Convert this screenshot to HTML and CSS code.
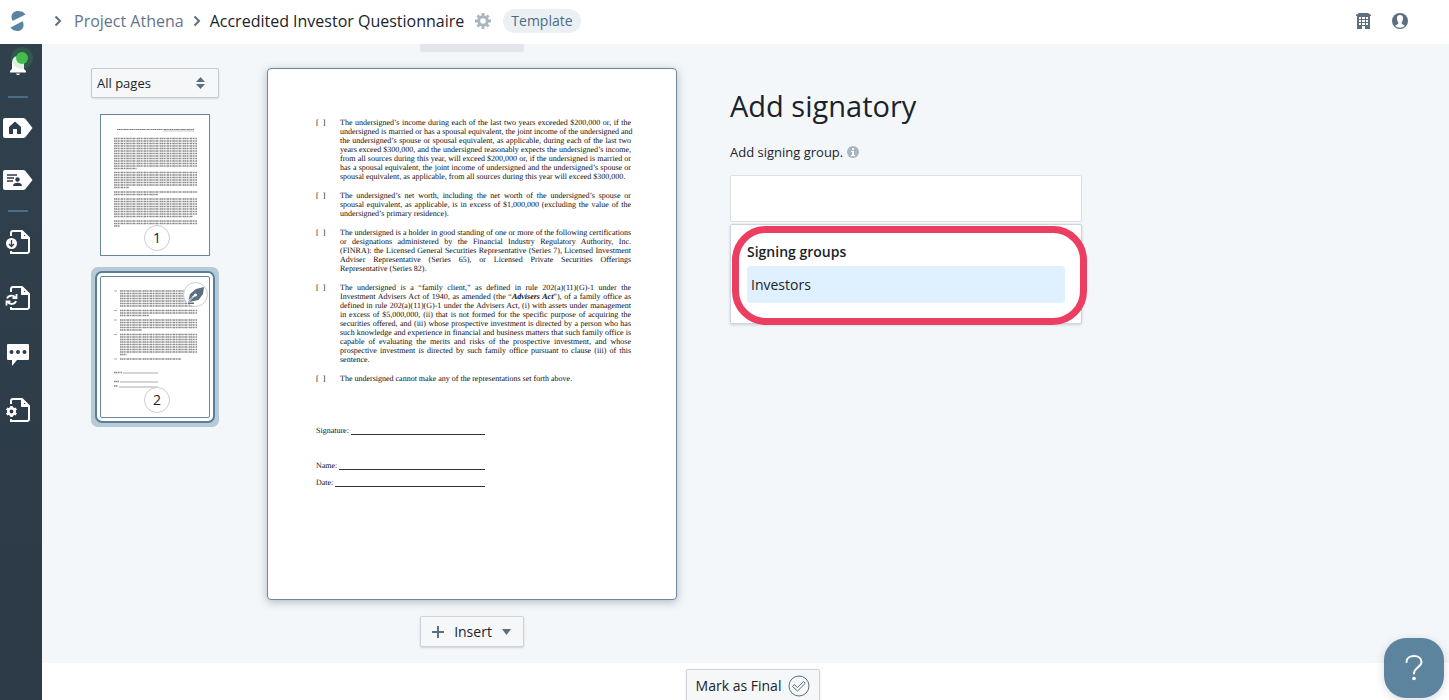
FILE: index.html
```html
<!DOCTYPE html>
<html lang="en">

<head>
    <meta charset="UTF-8">
    <meta name="viewport" content="width=device-width, initial-scale=1.0">
    <title>Accredited Investor Questionnaire</title>
    <link rel="stylesheet" href="styles.css">
</head>

<body>
    <header class="topbar">
        <a href="#" class="logo" aria-label="Home">
            <svg width="16" height="20" viewBox="0 0 16 20" fill="#5b84a0">
                <path d="M15.500 3.500C14 1 11 0 8 0C4 0 1.500 2.500 1.500 6C1.500 8 2 9 3 9.800Z" />
                <path d="M.5 16.500C2 19 5 20 7.500 20C11 20 13.500 17.500 13.500 14.500C13.500 12.500 13.200 11.300 12.500 10.200Z" />
            </svg>
        </a>
        <nav class="breadcrumb">
            <svg class="chevron" width="8" height="12" viewBox="0 0 8 12"><path d="M1.500 1.500L6 6L1.500 10.500" /></svg>
            <a href="#" class="crumb">Project Athena</a>
            <svg class="chevron" width="8" height="12" viewBox="0 0 8 12"><path d="M1.500 1.500L6 6L1.500 10.500" /></svg>
            <span class="crumb-current">Accredited Investor Questionnaire</span>
        </nav>
        <button class="icon-button" aria-label="Settings">
            <svg width="16" height="16" viewBox="-8 -8 16 16" fill="none" stroke="#a9b6c1">
                <circle r="4.300" stroke-width="3" />
                <path stroke-width="2.800" d="M0-5V-8M0 5V8M-5 0H-8M5 0H8M-3.700-3.700L-5.600-5.600M3.700 3.700L5.600 5.600M-3.700 3.700L-5.600 5.600M3.700-3.700L5.600-5.600" />
            </svg>
        </button>
        <span class="badge">Template</span>
        <div class="topbar-actions">
            <button class="icon-button" aria-label="Organization">
                <svg width="15" height="16" viewBox="0 0 15 16" fill="#5c6f80" fill-rule="evenodd">
                    <path d="M0 2L3 0H12L15 2V3H14V16H9V13H6V16H1V3H0ZM3 4V6H5V4ZM6 4V6H9V4ZM10 4V6H12V4ZM3 7V9H5V7ZM6 7V9H9V7ZM10 7V9H12V7ZM3 10V12H5V10ZM6 10V12H9V10ZM10 10V12H12V10Z" />
                </svg>
            </button>
            <button class="icon-button" aria-label="Account">
                <svg width="16" height="16" viewBox="0 0 16 16">
                    <circle cx="8" cy="8" r="8" fill="#5c6f80" />
                    <path fill="#fff" d="M8 2C5.800 2 4.800 3.500 5 5.500C5 7.500 5.800 8.800 6.300 9.300V10.800C5.500 11.800 4 12 3 12.800C5.500 15.300 10.500 15.300 13 12.800C12 12 10.500 11.800 9.700 10.800V9.300C10.200 8.800 11 7.500 11 5.500C11.200 3.500 10.200 2 8 2Z" />
                </svg>
            </button>
        </div>
    </header>

    <div class="shell">
        <aside class="sidebar">
            <a href="#" aria-label="Notifications">
                <svg class="bell" width="36" height="34" viewBox="0 0 36 34">
                    <path fill="#fff" d="M18 12C14 12 12 15 12 19V25L10 27V28.500H26V27L24 25V19C24 15 22 12 18 12Z" />
                    <path fill="#fff" d="M16 29.500H20L19 31H17Z" />
                    <circle cx="22" cy="14" r="11" fill="#42bd4b" fill-opacity=".18" />
                    <circle cx="22" cy="14" r="6" fill="#42bd4b" />
                </svg>
            </a>
            <hr>
            <div class="nav-group">
                <a href="#" aria-label="Dashboard">
                    <svg width="36" height="24" viewBox="0 0 36 24">
                        <path fill="#fff" d="M5 2H23Q24.500 2 25.500 3L32.500 12L25.500 21Q24.500 22 23 22H5Q3 22 3 20V4Q3 2 5 2Z" />
                        <path fill="#2f3d4a" d="M9 11L15 5.500L21 11V18H17V13H13V18H9Z" />
                    </svg>
                </a>
                <a href="#" aria-label="Contacts">
                    <svg width="36" height="24" viewBox="0 0 36 24">
                        <path fill="#fff" d="M5 2H23Q24.500 2 25.500 3L32.500 12L25.500 21Q24.500 22 23 22H5Q3 22 3 20V4Q3 2 5 2Z" />
                        <path stroke="#2f3d4a" stroke-width="1.500" d="M7 7H17M7 10H14M7 13H13" />
                        <circle cx="17.500" cy="11.500" r="2.200" fill="#2f3d4a" />
                        <path fill="#2f3d4a" d="M13 18C13 15.500 15 14.800 17.500 14.800S22 15.500 22 18Z" />
                    </svg>
                </a>
            </div>
            <hr>
            <div class="nav-group nav-group-wide">
                <a href="#" aria-label="Download documents">
                    <svg width="36" height="24" viewBox="0 0 36 24" fill="none" stroke="#fff" stroke-width="2">
                        <path d="M11 6V3Q11 1 13 1H22L29 8V21Q29 23 27 23H11V21M22 1V8H29" />
                        <path d="M23 2V7H28" />
                        <circle cx="11.500" cy="13.500" r="5.500" fill="#fff" stroke="none" />
                        <path stroke="#2f3d4a" stroke-width="1.300" d="M11.500 10V16.500M9 14L11.500 16.500L14 14" />
                    </svg>
                </a>
                <a href="#" aria-label="Sync documents">
                    <svg width="36" height="24" viewBox="0 0 36 24" fill="none" stroke="#fff" stroke-width="2">
                        <path d="M11 6V3Q11 1 13 1H22L29 8V21Q29 23 27 23H11V21M22 1V8H29" />
                        <path d="M23 2V7H28" />
                        <path stroke-width="1.800" d="M7 12.500C8 9.500 13 8.500 15.500 11.500M16.500 8V12H12.500M16 15C15 18.500 10 19 7.500 16M6.500 19.500V15.500H10.500" />
                    </svg>
                </a>
                <a href="#" aria-label="Messages">
                    <svg width="36" height="24" viewBox="0 0 36 24">
                        <path fill="#fff" d="M8 2H28Q29 2 29 3V17Q29 18 28 18H17L12 24V18H8Q7 18 7 17V3Q7 2 8 2Z" />
                        <g fill="#2f3d4a"><circle cx="11.500" cy="10" r="2" /><circle cx="18" cy="10" r="2" /><circle cx="24.500" cy="10" r="2" /></g>
                    </svg>
                </a>
                <a href="#" aria-label="Document settings">
                    <svg width="36" height="24" viewBox="0 0 36 24" fill="none" stroke="#fff" stroke-width="2">
                        <path d="M11 6V3Q11 1 13 1H22L29 8V21Q29 23 27 23H11V21M22 1V8H29" />
                        <path d="M23 2V7H28" />
                        <circle cx="11.500" cy="13.500" r="3.200" stroke-width="2.600" />
                        <path stroke-width="2.600" d="M11.500 10V8M11.500 17V19M8.500 11.700L6.700 10.700M14.500 15.300L16.300 16.300M8.500 15.300L6.700 16.300M14.500 11.700L16.300 10.700" />
                    </svg>
                </a>
            </div>
        </aside>

        <main class="main">
            <div class="workspace">
                <div class="pages">
                    <div class="select-wrap">
                        <select class="select" aria-label="Filter pages">
                            <option>All pages</option>
                        </select>
                        <svg class="select-arrows" width="9" height="12" viewBox="0 0 9 12" fill="#5c6f80"><path d="M4.500 0L9 5H0ZM0 7H9L4.500 12Z" /></svg>
                    </div>
                    <a href="#" class="thumb" aria-label="Page 1">
                        <svg class="thumb-drawing" viewBox="0 0 108 140">
                            <path stroke="#777" stroke-width="1.200" stroke-dasharray="1 .4 2 .3 1.500 .5" d="M16 14.500H93" />
                            <path stroke="#777" stroke-width=".4" d="M62 16H93" />
                            <g class="thumb-lines">
                                <path d="M13 23.500H96M13 26H96M13 28.500H96M13 31H96M13 33.500H96M13 36H96M13 38.500H96M13 41H96M13 43.500H96M13 46H96M13 48.500H96M13 51H96M13 53.500H36" />
                                <path d="M13 57.500H96M13 60H96M13 62.500H96M13 65H96M13 67.500H96M13 70H96M13 72.500H28M13 77H96M13 79.500H57" />
                                <path d="M13 84H96M13 86.500H96M13 89H96M13 91.500H96M13 94H96M13 96.500H96M13 99H96M13 101.500H92M13 106H96M13 108.500H96M13 111H19" />
                            </g>
                        </svg>
                        <span class="page-number">1</span>
                    </a>
                    <a href="#" class="thumb thumb-active" aria-label="Page 2">
                        <svg class="thumb-drawing" viewBox="0 0 108 140">
                            <g class="thumb-lines">
                                <path d="M19 14H96M19 16.500H96M19 19H96M19 21.500H96M19 24H96M19 26.500H96M19 29H94M19 33.500H96M19 36H96M19 38.500H48" />
                                <path d="M19 43H96M19 45.500H96M19 48H96M19 50.500H96M19 53H41M19 57.500H96M19 60H96M19 62.500H96M19 65H96M19 67.500H96M19 70H96M19 72.500H96M19 75H96M19 77.500H26M19 82H80" />
                                <path d="M13 95.500H21M13 104.500H18M13 109H17" />
                            </g>
                            <path stroke="#888" stroke-width=".7" d="M13 14H16M13 33.500H16M13 43H16M13 57.500H16M13 82H16M22 96H57M19 105H57M18 110H57" />
                        </svg>
                        <span class="signing-mark">
                            <svg width="18" height="18" viewBox="0 0 18 18">
                                <path fill="#5c6f80" d="M17 1L16 8L11.500 14L2 16L1 15.500L5 11C6.500 12 8.500 10 7.500 8.500L1.500 14L3 8L9 3Z" />
                                <path stroke="#5c6f80" stroke-width="2" d="M1 17.500H7" />
                                <circle cx="8.500" cy="9" r="1.500" fill="#fff" />
                                <path stroke="#fff" stroke-width=".8" d="M8.500 9L1 16.500" />
                            </svg>
                        </span>
                        <span class="page-number">2</span>
                    </a>
                </div>

                <div class="document">
                    <div class="insert-previous"></div>
                    <article class="paper">
                        <div class="clause">
                            <span>[&nbsp;&nbsp;]</span>
                            <p class="fixed-lines">
                                <b>The undersigned’s income during each of the last two years exceeded $200,000 or, if the</b>
                                <b>undersigned is married or has a spousal equivalent, the joint income of the undersigned and</b>
                                <b>the undersigned’s spouse or spousal equivalent, as applicable, during each of the last two</b>
                                <b>years exceed $300,000, and the undersigned reasonably expects the undersigned’s income,</b>
                                <b>from all sources during this year, will exceed $200,000 or, if the undersigned is married or</b>
                                <b>has a spousal equivalent, the joint income of undersigned and the undersigned’s spouse or</b>
                                <b>spousal equivalent, as applicable, from all sources during this year will exceed $300,000.</b>
                            </p>
                        </div>
                        <div class="clause">
                            <span>[&nbsp;&nbsp;]</span>
                            <p>The undersigned’s net worth, including the net worth of the undersigned’s spouse or spousal equivalent, as applicable, is in excess of $1,000,000 (excluding the value of the undersigned’s primary residence).</p>
                        </div>
                        <div class="clause">
                            <span>[&nbsp;&nbsp;]</span>
                            <p>The undersigned is a holder in good standing of one or more of the following certifications or designations administered by the Financial Industry Regulatory Authority, Inc. (FINRA): the Licensed General Securities Representative (Series 7), Licensed Investment Adviser Representative (Series 65), or Licensed Private Securities Offerings Representative (Series 82).</p>
                        </div>
                        <div class="clause">
                            <span>[&nbsp;&nbsp;]</span>
                            <p>The undersigned is a “family client,” as defined in rule 202(a)(11)(G)-1 under the Investment Advisers Act of 1940, as amended (the “<em>Advisers Act</em>”), of a family office as defined in rule 202(a)(11)(G)-1 under the Advisers Act, (i) with assets under management in excess of $5,000,000, (ii) that is not formed for the specific purpose of acquiring the securities offered, and (iii) whose prospective investment is directed by a person who has such knowledge and experience in financial and business matters that such family office is capable of evaluating the merits and risks of the prospective investment, and whose prospective investment is directed by such family office pursuant to clause (iii) of this sentence.</p>
                        </div>
                        <div class="clause">
                            <span>[&nbsp;&nbsp;]</span>
                            <p>The undersigned cannot make any of the representations set forth above.</p>
                        </div>
                        <div class="sign-block">
                            <div class="sign-line sign-line-first">Signature:<i></i></div>
                            <div class="sign-line">Name:<i></i></div>
                            <div class="sign-line">Date:<i></i></div>
                        </div>
                    </article>
                    <button class="button insert-button">
                        <svg width="12" height="12" viewBox="0 0 12 12"><path stroke="#5c6f80" stroke-width="2" d="M6 0V12M0 6H12" /></svg>
                        Insert
                        <svg width="9" height="6" viewBox="0 0 9 6"><path fill="#5c6f80" d="M0 0H9L4.500 6Z" /></svg>
                    </button>
                </div>

                <section class="panel">
                    <h1>Add signatory</h1>
                    <div class="field-label">
                        <label for="signingGroup">Add signing group.</label>
                        <svg width="12" height="12" viewBox="0 0 12 12">
                            <circle cx="6" cy="6" r="6" fill="#a9b4be" />
                            <path fill="#fff" d="M5 2H7V4H5ZM4 5H7V9H8V10H4V9H5V6H4Z" />
                        </svg>
                    </div>
                    <input type="text" id="signingGroup" class="group-input">
                    <div class="dropdown">
                        <h2>Signing groups</h2>
                        <button class="option">Investors</button>
                        <div class="highlight"></div>
                    </div>
                </section>
            </div>

            <footer class="footer">
                <button class="button final-button">
                    Mark as Final
                    <svg width="22" height="22" viewBox="0 0 22 22" fill="none" stroke="#5c6f80">
                        <circle cx="11" cy="11" r="10" />
                        <path d="M4.500 11.500L6.300 9.500L9.500 12.500L15.500 6.500L17.300 8.300L9.500 16Z" />
                    </svg>
                </button>
            </footer>
        </main>
    </div>

    <button class="help-button" aria-label="Help">
        <svg width="18" height="26" viewBox="0 0 18 26">
            <path fill="none" stroke="#fff" stroke-width="2" stroke-linecap="round" d="M1.500 7C1.500 3 5 1 9 1C13.500 1 16.500 3.500 16.500 7C16.500 12.500 9 12 9 18.500" />
            <circle cx="9" cy="23.500" r="1.800" fill="#fff" />
        </svg>
    </button>
</body>

</html>
```

FILE: styles.css
```css
* {
    box-sizing: border-box;
}

body {
    margin: 0;
    height: 100vh;
    display: flex;
    flex-direction: column;
    overflow: hidden;
    background-color: #fff;
    color: #1b2329;
    font-family: 'Open Sans', sans-serif;
    font-size: 14px;
    line-height: 20px;
}

svg {
    display: block;
    flex: none;
}

h1,
h2,
p {
    margin: 0;
}

a {
    color: inherit;
    text-decoration: none;
}

button,
select,
input {
    font: inherit;
    color: inherit;
    cursor: pointer;
}

/* Top bar */
.topbar {
    display: flex;
    align-items: center;
    flex: none;
    height: 44px;
    padding: 0 41px 2px 10px;
    background-color: #fff;
    font-size: 16px;
}

.logo {
    margin-right: 28px;
}

.breadcrumb {
    display: flex;
    align-items: center;
    gap: 9px;
    margin-right: 11px;
}

.chevron {
    fill: none;
    stroke: #5c6f80;
    stroke-width: 2;
}

.crumb {
    color: #64748b;
}

.breadcrumb .crumb:first-of-type {
    margin-left: 3px;
}

.icon-button {
    padding: 0;
    border: none;
    background: none;
}

.badge {
    margin-left: 12px;
    padding: 2px 8px;
    border-radius: 12px;
    background-color: #ebf0f4;
    color: #4b6c86;
    font-size: 14px;
}

.topbar-actions {
    display: flex;
    gap: 21px;
    margin-left: auto;
}

.shell {
    display: flex;
    flex: 1;
    min-height: 0;
}

/* Side navigation */
.sidebar {
    flex: none;
    width: 42px;
    background: linear-gradient(#30404d, #2d3a47);
}

.sidebar hr {
    width: 20px;
    height: 2px;
    margin: 18px 14px 18px 8px;
    border: none;
    background-color: #4b6c86;
}

.nav-group {
    display: flex;
    flex-direction: column;
    gap: 28px;
}

.nav-group-wide {
    gap: 32px;
}

/* Main area */
.main {
    display: flex;
    flex-direction: column;
    flex: 1;
    min-width: 0;
}

.workspace {
    display: flex;
    flex: 1;
    min-height: 0;
    padding: 0 48px 0 49px;
    overflow: hidden;
    background-color: #f3f7fa;
}

.pages {
    flex: none;
    width: 128px;
    margin-right: 48px;
    padding-top: 24px;
}

.select-wrap {
    position: relative;
    margin-bottom: 16px;
}

.select {
    width: 100%;
    height: 30px;
    padding: 0 5px;
    border: 1px solid #c6cacd;
    border-radius: 2px;
    background-color: #f5f7f9;
    box-shadow: 0 1px 2px rgba(0, 0, 0, 0.12);
    appearance: none;
    font-size: 13px;
}

.select-arrows {
    position: absolute;
    top: 9px;
    right: 14px;
    pointer-events: none;
}

.thumb {
    display: block;
    position: relative;
    width: 110px;
    margin: 0 auto 20px;
    border: 1px solid #6c8497;
    background-color: #fff;
}

.thumb-active {
    outline: 2px solid #557f9c;
    outline-offset: 3px;
    box-shadow: 0 0 0 4px #fff, 0 0 0 9px #b7cad6;
    border-radius: 2px;
}

.thumb-lines path {
    fill: none;
    stroke: #8a8a8a;
    stroke-width: 1.3;
    stroke-dasharray: 1 .3 2 .5 1.500 .4 .7 .5 2.500 .6 1 .5;
}

.page-number,
.signing-mark {
    position: absolute;
    display: flex;
    align-items: center;
    justify-content: center;
    border: 1px solid #c9ced2;
    border-radius: 50%;
    background-color: #fff;
}

.page-number {
    left: 43px;
    bottom: 4px;
    width: 26px;
    height: 26px;
}

.signing-mark {
    top: 5px;
    right: 1px;
    width: 25px;
    height: 25px;
}

/* Document page */
.document {
    display: flex;
    flex-direction: column;
    align-items: center;
    flex: none;
    width: 410px;
    margin-right: 53px;
}

.insert-previous {
    flex: none;
    width: 104px;
    height: 8px;
    margin-bottom: 16px;
    border-radius: 0 0 2px 2px;
    background-color: #e2e6ea;
}

.paper {
    flex: none;
    width: 100%;
    aspect-ratio: 410 / 532;
    margin-bottom: 16px;
    padding: 49px 45px 0 48px;
    border: 1px solid #70889a;
    border-radius: 4px;
    background-color: #fff;
    box-shadow: 0 2px 8px rgba(50, 70, 90, 0.35);
    font-family: 'Liberation Serif', serif;
    font-size: 8px;
    line-height: 9px;
    color: #111;
    text-rendering: geometricPrecision;
}

.clause {
    display: flex;
    margin-bottom: 10px;
}

.clause span {
    flex: none;
    width: 24px;
}

.clause p {
    flex: 1;
    min-width: 0;
    text-align: justify;
}

/* keeps the line breaks of the source document */
.fixed-lines b {
    display: block;
    font-weight: normal;
    white-space: nowrap;
    text-align-last: justify;
}

.fixed-lines b:last-child {
    text-align-last: left;
}

.clause em {
    font-weight: bold;
}

.sign-block {
    width: 169px;
    margin-top: 43px;
}

.sign-line {
    display: flex;
    gap: 2px;
    margin-bottom: 8px;
}

.sign-line-first {
    margin-bottom: 26px;
}

.sign-line i {
    flex: 1;
    border-bottom: 1px solid #333;
}

.button {
    display: flex;
    align-items: center;
    flex: none;
    border: 1px solid #cfd3d7;
    border-radius: 2px;
    background-color: #f5f7f9;
    box-shadow: 0 1px 2px rgba(0, 0, 0, 0.15);
}

.insert-button {
    gap: 10px;
    height: 31px;
    padding: 0 12px 0 11px;
}

/* Signatory form */
.panel {
    flex: 1;
    max-width: 352px;
    padding-top: 43px;
}

h1 {
    margin-bottom: 17px;
    font-size: 29px;
    font-weight: 400;
    line-height: 38px;
}

.field-label {
    display: flex;
    align-items: center;
    gap: 4px;
    margin-bottom: 13px;
    font-size: 13px;
}

.group-input {
    display: block;
    width: 100%;
    height: 47px;
    margin-bottom: 2px;
    padding: 0 12px;
    border: 1px solid #dde1e5;
    border-radius: 2px;
    background-color: #fff;
}

.dropdown {
    position: relative;
    height: 100px;
    padding: 17px 16px;
    border: 1px solid #cbd5df;
    border-radius: 2px;
    background-color: #fff;
    box-shadow: 0 1px 3px rgba(0, 0, 0, 0.15);
}

h2 {
    margin-bottom: 4px;
    font-size: 14px;
    font-weight: 600;
    line-height: 20px;
}

.option {
    display: block;
    width: 100%;
    height: 37px;
    padding: 0 4px;
    border: none;
    border-radius: 4px;
    background-color: #dff0ff;
    text-align: left;
}

.highlight {
    position: absolute;
    top: 1px;
    right: -6px;
    bottom: -2px;
    left: 1px;
    border: 7px solid #ec3e60;
    border-radius: 34px;
    pointer-events: none;
}

/* Footer */
.footer {
    display: flex;
    justify-content: center;
    align-items: flex-start;
    flex: none;
    height: 37px;
    padding: 6px 20px 0 35px;
    background-color: #fff;
}

.footer .final-button {
    gap: 7px;
    height: 33px;
    padding: 0 9px;
}

.help-button {
    position: fixed;
    right: 5px;
    bottom: 2px;
    display: flex;
    align-items: center;
    justify-content: center;
    width: 60px;
    height: 60px;
    padding: 0;
    border: none;
    border-radius: 22px;
    background-color: #5d849f;
    box-shadow: 0 2px 10px rgba(0, 0, 0, 0.15);
}
```
